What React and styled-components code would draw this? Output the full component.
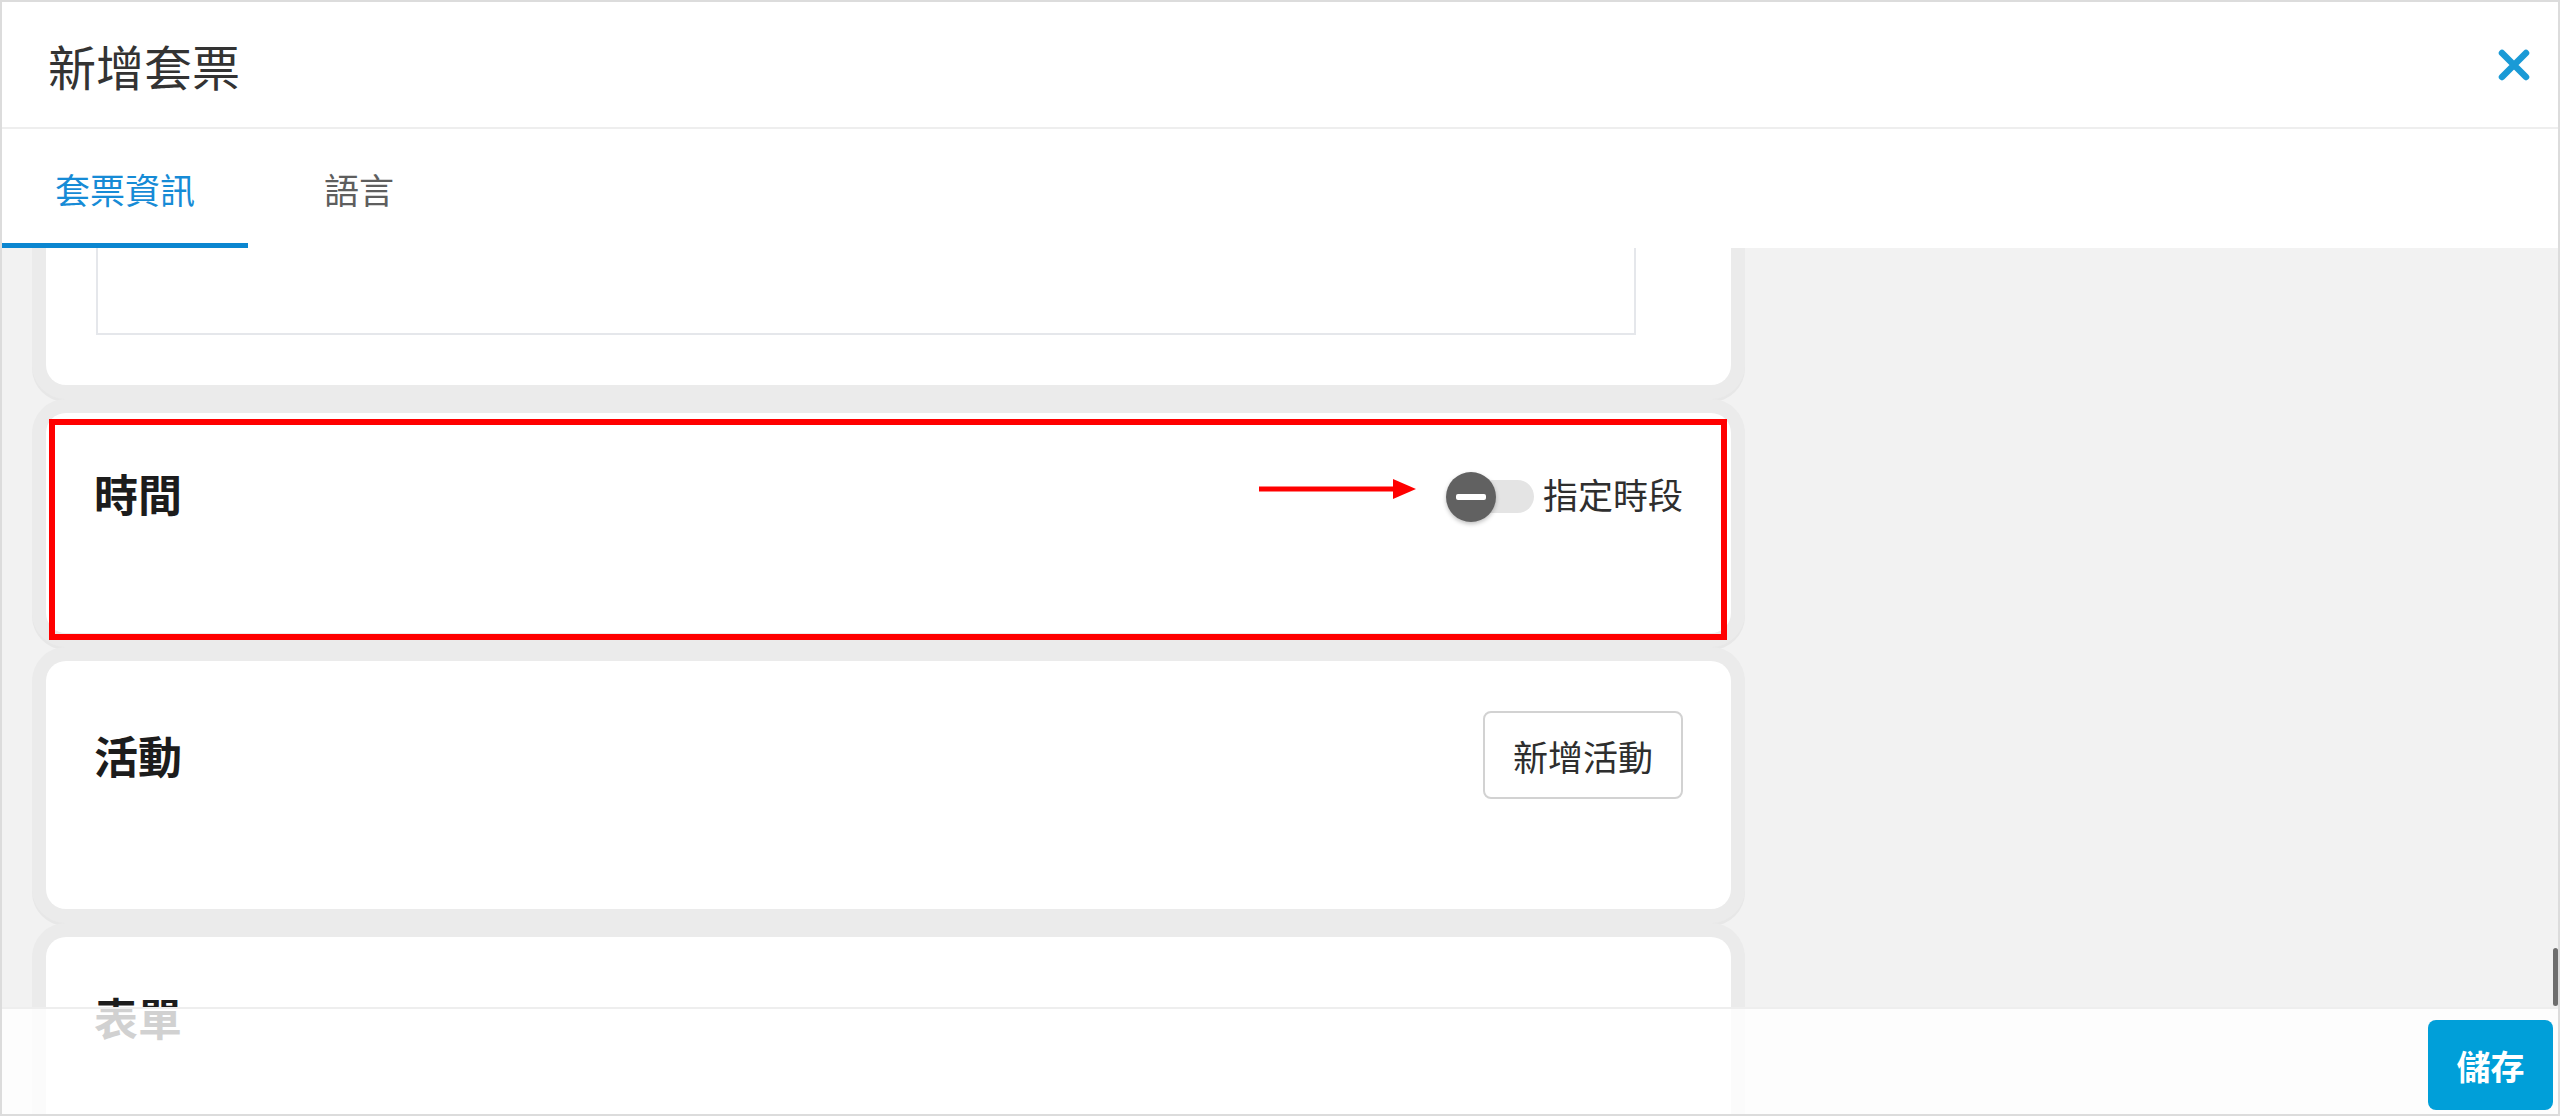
import React, { useLayoutEffect, useRef } from "react";
import styled, { createGlobalStyle } from "styled-components";

const GlobalStyle = createGlobalStyle`
  html, body {
    margin: 0;
    padding: 0;
    height: 100%;
    background: #ffffff;
  }
  body {
    font-family: "Noto Sans CJK TC", "Noto Sans", "Liberation Sans", sans-serif;
  }
  #root {
    height: 100%;
  }
  * {
    box-sizing: border-box;
  }
`;

const Frame = styled.div`
  position: relative;
  width: 100vw;
  height: 100vh;
  border: 2px solid #dcdcdc;
  display: flex;
  flex-direction: column;
  overflow: hidden;
  background: #ffffff;
`;

const Header = styled.header`
  flex: 0 0 127px;
  display: flex;
  align-items: center;
  justify-content: space-between;
  padding: 0 28px 0 46px;
  border-bottom: 2px solid #eeeeee;
`;

const Title = styled.h1`
  margin: 0;
  font-size: 48px;
  font-weight: 400;
  color: #333333;
  line-height: 1;
`;

const CloseButton = styled.button`
  width: 32px;
  height: 32px;
  padding: 0;
  border: 0;
  background: transparent;
  display: flex;
  align-items: center;
  justify-content: center;
  cursor: pointer;
`;

const TabBar = styled.nav`
  flex: 0 0 119px;
  display: flex;
  align-items: stretch;
  gap: 23px;
  background: #ffffff;
`;

const Tab = styled.div`
  display: flex;
  align-items: center;
  padding: 0 53px;
  font-size: 35px;
  line-height: 1;
  color: ${(p) => (p.$active ? "#168bd6" : "#5e5e5e")};
  box-shadow: ${(p) => (p.$active ? "inset 0 -5px 0 #0b86d0" : "none")};
  cursor: pointer;
`;

const Body = styled.main`
  position: relative;
  flex: 1 1 auto;
  min-height: 0;
  background: #f2f2f2;
`;

const Scroller = styled.div`
  position: relative;
  height: 100%;
  overflow: hidden;
`;

const Column = styled.div`
  width: 1685px;
  margin-left: 44px;
  display: flex;
  flex-direction: column;
  gap: 28px;
  padding: 40px 0 300px;
`;

const Card = styled.section`
  position: relative;
  background: #ffffff;
  border-radius: 20px;
  box-shadow: 0 0 0 14px #ebebeb, 0 3px 0 14px #e7e7e7;
  padding: ${(p) => p.$top ?? 50}px 48px ${(p) => p.$bottom ?? 110}px 48px;
`;

const CardHeader = styled.div`
  display: flex;
  align-items: center;
  justify-content: space-between;
  min-height: ${(p) => p.$h || 60}px;
`;

const CardTitle = styled.h2`
  margin: 0;
  font-size: 44px;
  font-weight: 700;
  color: #1c1c1c;
  line-height: 1;
`;

const TextArea = styled.div`
  width: 1540px;
  height: 220px;
  margin-left: 2px;
  border: 2px solid #e5e7eb;
  background: #ffffff;
`;

const Controls = styled.div`
  display: flex;
  align-items: center;
`;

const ArrowMark = styled.svg`
  display: block;
  margin-right: 30px;
  margin-bottom: 8px;
`;

const Switch = styled.div`
  position: relative;
  width: 88px;
  height: 50px;
  margin-top: 8px;
  margin-right: 9px;
`;

const Track = styled.div`
  position: absolute;
  left: 30px;
  right: 0;
  top: 8px;
  height: 33px;
  border-radius: 17px;
  background: #e4e4e4;
`;

const Thumb = styled.div`
  position: absolute;
  left: 0;
  top: 0;
  width: 50px;
  height: 50px;
  border-radius: 50%;
  background: #616161;
  box-shadow: 0 2px 4px rgba(0, 0, 0, 0.25);
  display: flex;
  align-items: center;
  justify-content: center;
`;

const Minus = styled.span`
  width: 30px;
  height: 6px;
  border-radius: 2px;
  background: #ffffff;
`;

const SwitchLabel = styled.span`
  font-size: 35px;
  color: #2e2e2e;
  line-height: 1;
`;

const OutlineButton = styled.button`
  width: 200px;
  height: 88px;
  border: 2px solid #d2d2d2;
  border-radius: 8px;
  background: #ffffff;
  font-family: inherit;
  font-size: 35px;
  color: #2e2e2e;
  padding: 0;
  cursor: pointer;
`;

const Highlight = styled.div`
  position: absolute;
  top: 6px;
  left: 3px;
  right: 4px;
  bottom: -7px;
  border: 6px solid #ff0000;
  pointer-events: none;
`;

const ScrollThumb = styled.div`
  position: absolute;
  right: 0;
  bottom: 108px;
  width: 5px;
  height: 58px;
  border-radius: 3px;
  background: #6e6e6e;
`;

const Footer = styled.footer`
  position: absolute;
  left: 0;
  right: 0;
  bottom: 0;
  height: 107px;
  border-top: 2px solid #eeeeee;
  background: rgba(255, 255, 255, 0.8);
  display: flex;
  justify-content: flex-end;
  align-items: flex-end;
  padding: 0 5px 4px 0;
`;

const SaveButton = styled.button`
  width: 125px;
  height: 90px;
  border: 0;
  border-radius: 8px;
  background: #009fd9;
  color: #ffffff;
  font-family: inherit;
  font-size: 34px;
  font-weight: 700;
  padding: 0;
  cursor: pointer;
`;

function CloseIcon() {
  return (
    <svg width="32" height="32" viewBox="0 0 32 32">
      <path
        d="M4 4 L28 28 M28 4 L4 28"
        stroke="#1a9ad6"
        strokeWidth="6.5"
        strokeLinecap="round"
      />
    </svg>
  );
}

function RedArrow() {
  return (
    <ArrowMark width="157" height="24" viewBox="0 0 157 24">
      <rect x="0" y="9.5" width="138" height="5" fill="#ff0000" />
      <polygon points="134,2 157,12 134,22" fill="#ff0000" />
    </ArrowMark>
  );
}

export default function App() {
  const scrollerRef = useRef(null);
  const firstCardRef = useRef(null);

  useLayoutEffect(() => {
    const s = scrollerRef.current;
    const c = firstCardRef.current;
    if (s && c) {
      s.scrollTop = c.offsetTop + c.offsetHeight - 137;
    }
  }, []);

  return (
    <>
      <GlobalStyle />
      <Frame>
        <Header>
          <Title>新增套票</Title>
          <CloseButton aria-label="close">
            <CloseIcon />
          </CloseButton>
        </Header>
        <TabBar>
          <Tab $active>套票資訊</Tab>
          <Tab>語言</Tab>
        </TabBar>
        <Body>
          <Scroller ref={scrollerRef}>
            <Column>
              <Card ref={firstCardRef} $top={40} $bottom={50}>
                <TextArea />
              </Card>
              <Card>
                <CardHeader>
                  <CardTitle>時間</CardTitle>
                  <Controls>
                    <RedArrow />
                    <Switch>
                      <Track />
                      <Thumb>
                        <Minus />
                      </Thumb>
                    </Switch>
                    <SwitchLabel>指定時段</SwitchLabel>
                  </Controls>
                </CardHeader>
                <Highlight />
              </Card>
              <Card>
                <CardHeader $h={88}>
                  <CardTitle>活動</CardTitle>
                  <OutlineButton>新增活動</OutlineButton>
                </CardHeader>
              </Card>
              <Card>
                <CardHeader>
                  <CardTitle>表單</CardTitle>
                </CardHeader>
              </Card>
            </Column>
          </Scroller>
          <ScrollThumb />
          <Footer>
            <SaveButton>儲存</SaveButton>
          </Footer>
        </Body>
      </Frame>
    </>
  );
}
